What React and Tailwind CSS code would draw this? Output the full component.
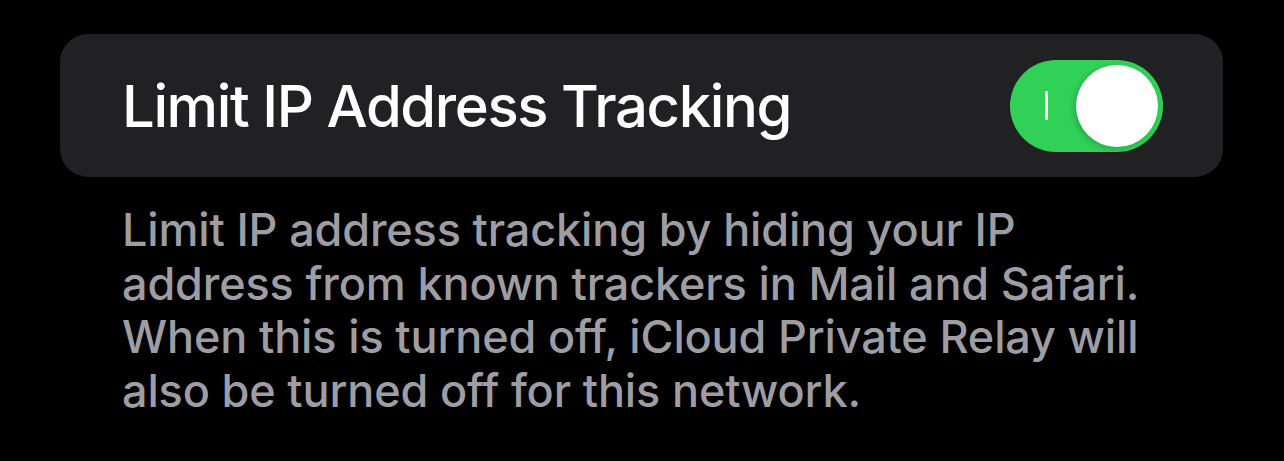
export default function App() {
    return (
        <div className="w-[1284px] h-[461px] bg-black overflow-hidden" style={{ fontFamily: 'Inter, "Noto Sans", sans-serif' }}>
            <div className="pt-[34px] pl-[60px] pr-[61px]">
                <div className="h-[143px] rounded-[28px] bg-[#212123] flex items-center justify-between pl-[62px] pr-[60px]">
                    <span className="text-[58px] leading-none font-medium text-white tracking-[-1.4px]">
                        Limit IP Address Tracking
                    </span>
                    <div className="w-[153px] h-[92px] rounded-full bg-[#31d158] flex items-center justify-between pl-[35px] pr-[5px]">
                        <div className="w-[3px] h-[29px] bg-white rounded-full" />
                        <div className="w-[82px] h-[82px] rounded-full bg-white shadow-[-2px_2px_6px_rgba(0,0,0,0.2)]" />
                    </div>
                </div>
                <p className="mt-[26px] pl-[62px] text-[45px] leading-[53.5px] font-medium text-[#9d9da3] tracking-[-0.15px]">
                    Limit IP address tracking by hiding your IP<br />
                    address from known trackers in Mail and Safari.<br />
                    When this is turned off, iCloud Private Relay will<br />
                    also be turned off for this network.
                </p>
            </div>
        </div>
    );
}
